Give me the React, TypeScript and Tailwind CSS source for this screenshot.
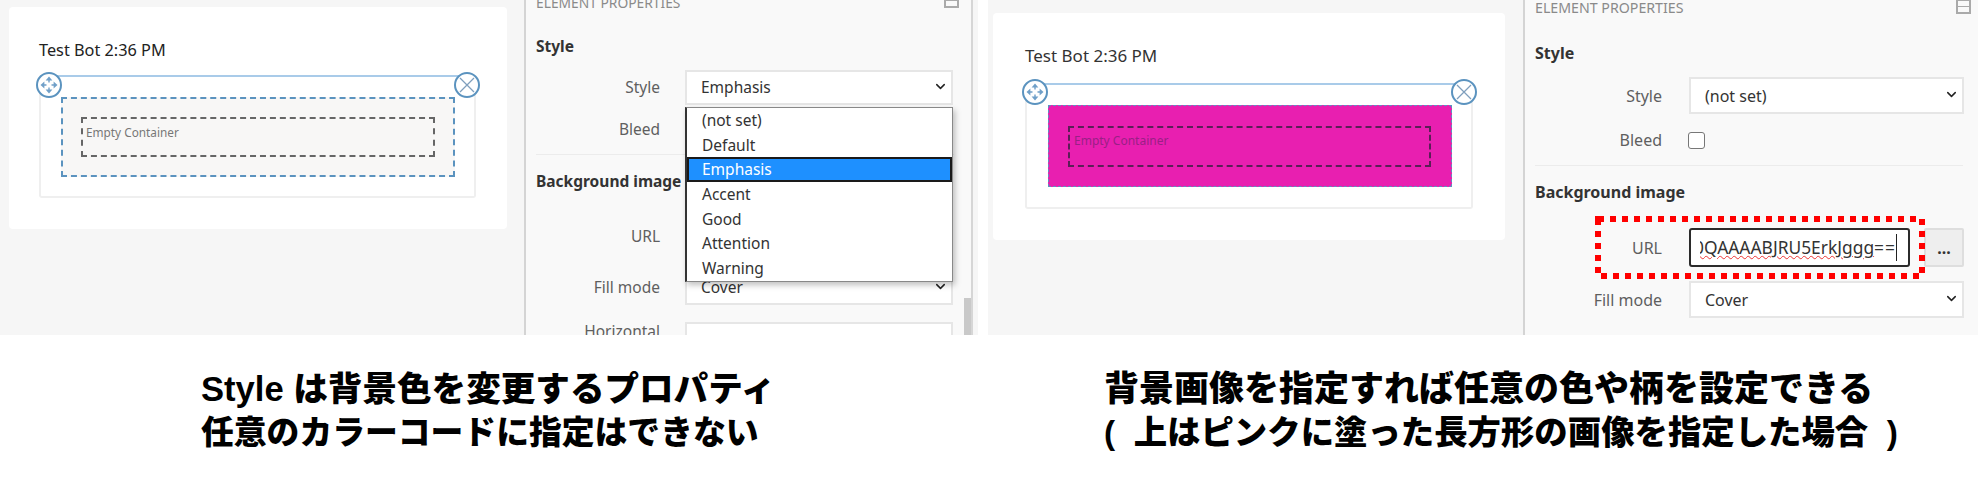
import type { ReactNode } from "react";
import { ChevronDown } from "lucide-react";

function MoveHandle({ className }: { className: string }) {
  return (
    <div className={`absolute w-[26px] h-[26px] rounded-full border-2 border-[#5b93bf] bg-white ${className}`}>
      <svg viewBox="0 0 22 22" className="w-full h-full" fill="#6f9fc8" stroke="none">
        <path d="M11 2.5 L14.4 6.4 H7.6 Z" />
        <path d="M11 19.5 L14.4 15.6 H7.6 Z" />
        <path d="M2.5 11 L6.4 7.6 V14.4 Z" />
        <path d="M19.5 11 L15.6 7.6 V14.4 Z" />
        <path d="M10.3 6 H11.7 V8.5 H10.3 Z M10.3 13.5 H11.7 V16 H10.3 Z M6 10.3 H8.5 V11.7 H6 Z M13.5 10.3 H16 V11.7 H13.5 Z" />
      </svg>
    </div>
  );
}

function CloseHandle({ className }: { className: string }) {
  return (
    <div className={`absolute w-[26px] h-[26px] rounded-full border-2 border-[#5b93bf] bg-white ${className}`}>
      <svg viewBox="0 0 22 22" className="w-full h-full" fill="none" stroke="#7f9fbd" strokeWidth="1.3">
        <path d="M4 4 L18 18 M18 4 L4 18" />
      </svg>
    </div>
  );
}

function Select({ value, className }: { value: string; className: string }) {
  return (
    <div className={`flex items-center justify-between bg-white border-2 border-[#e6e6e6] pl-[14px] pr-[3px] text-[#333] ${className}`}>
      <span>{value}</span>
      <ChevronDown size={15} strokeWidth={2.4} className="text-[#222] mb-[2px]" />
    </div>
  );
}

function Row({ label, labelWidth, gap, className, children }: { label: string; labelWidth: string; gap: string; className: string; children?: ReactNode }) {
  return (
    <div className={`flex items-center ${gap} ${className}`}>
      <div className={`text-right text-[#5f5f5f] shrink-0 ${labelWidth}`}>{label}</div>
      {children}
    </div>
  );
}

const options = ["(not set)", "Default", "Emphasis", "Accent", "Good", "Attention", "Warning"];

function LeftShot() {
  return (
    <div className="flex w-[978px] h-[335px] bg-[#f6f6f6] overflow-hidden shrink-0">
      <div className="w-[524px] shrink-0 pl-[9px] pt-[7px]">
        <div className="w-[498px] h-[222px] bg-white rounded-[4px] pl-[30px] pt-[33px]">
          <div className="text-[16.3px] leading-[20px] text-[#222]">Test Bot 2:36 PM</div>
          <div className="relative w-[437px] h-[123px] mt-[15px] border-2 border-[#efefef] border-t-[#a9cbe9] rounded-[3px] pl-[20px] pt-[20px]">
            <MoveHandle className="-left-[5px] -top-[5px]" />
            <CloseHandle className="-right-[6px] -top-[5px]" />
            <div className="w-[394px] h-[80px] border-2 border-dashed border-[#5b93bf] bg-[#f8f7f6] pl-[18px] pt-[18px]">
              <div className="w-[354px] h-[40px] border-2 border-dashed border-[#666] pl-[3px] text-[11.8px] leading-[26px] text-[#777]">Empty Container</div>
            </div>
          </div>
        </div>
      </div>
      <div className="relative w-[449px] h-full shrink-0 border-l-2 border-r-2 border-l-[#d4d4d4] border-r-[#d6d6d6] bg-[#f9f9f9] pl-[10px] text-[15.5px]">
        <div className="flex justify-between items-center h-[20px] -mt-[7px] pr-[12px] text-[13.8px] text-[#8a8a8a]">
          <span>ELEMENT PROPERTIES</span>
          <span className="w-[15px] h-[15px] mb-[5px] border-2 border-[#aaa] flex items-center"><span className="w-full h-[1px] bg-[#aaa]" /></span>
        </div>
        <div className="mt-[23px] h-[20px] leading-[20px] font-bold text-[#333]">Style</div>
        <Row label="Style" labelWidth="w-[124px]" gap="gap-[25px]" className="mt-[14px]">
          <Select value="Emphasis" className="w-[268px] h-[35px]" />
        </Row>
        <Row label="Bleed" labelWidth="w-[124px]" gap="gap-[25px]" className="mt-[13px] h-[24px]" />
        <div className="mt-[12px] mr-[17px] h-[1px] bg-[#ececec]" />
        <div className="mt-[16px] h-[20px] leading-[20px] font-bold text-[#333]">Background image</div>
        <Row label="URL" labelWidth="w-[124px]" gap="gap-[25px]" className="mt-[28px] h-[35px]" />
        <Row label="Fill mode" labelWidth="w-[124px]" gap="gap-[25px]" className="mt-[16px]">
          <Select value="Cover" className="w-[268px] h-[35px]" />
        </Row>
        <div className="flex items-start gap-[25px] mt-[17px]">
          <div className="w-[124px] shrink-0 text-right text-[#5f5f5f] -mt-[2px]">Horizontal</div>
          <div className="w-[268px] h-[35px] bg-white border-2 border-[#e6e6e6]" />
        </div>
        <div className="absolute right-0 top-[298px] w-[7px] h-[37px] bg-[#c9c9c9]" />
        <div className="absolute left-[159px] top-[107px] w-[268px] h-[175px] bg-white border border-[#888] border-l-2 border-l-[#333] shadow-[2px_3px_6px_rgba(0,0,0,0.25)] text-[#333]">
          {options.map((o) =>
            o === "Emphasis" ? (
              <div key={o} className="h-[25px] leading-[21px] pl-[13px] bg-[#1e90ff] text-white border-2 border-[#1a1a1a]">{o}</div>
            ) : (
              <div key={o} className="h-[24.6px] leading-[24.6px] pl-[15px]">{o}</div>
            )
          )}
        </div>
      </div>
    </div>
  );
}

function RightShot() {
  return (
    <div className="flex w-[990px] h-[335px] bg-[#f6f6f6] overflow-hidden shrink-0">
      <div className="w-[535px] shrink-0 pl-[5px] pt-[13px]">
        <div className="w-[512px] h-[227px] bg-white rounded-[4px] pl-[32px] pt-[33px]">
          <div className="text-[17px] leading-[20px] text-[#333]">Test Bot 2:36 PM</div>
          <div className="relative w-[448px] h-[126px] mt-[17px] border-2 border-[#efefef] border-t-[#a9cbe9] rounded-[3px] pl-[21px] pt-[20px]">
            <MoveHandle className="-left-[5px] -top-[6px]" />
            <CloseHandle className="-right-[6px] -top-[6px]" />
            <div className="w-[404px] h-[82px] border border-dashed border-[#5b93bf] bg-[#e81fb0] pl-[19px] pt-[20px]">
              <div className="w-[363px] h-[41px] border-2 border-dashed border-[#5a1f56] pl-[4px] text-[12px] leading-[26px] text-[#9a1f86]">Empty Container</div>
            </div>
          </div>
        </div>
      </div>
      <div className="relative flex-1 h-full border-l-2 border-[#d4d4d4] bg-[#f9f9f9] pl-[10px] text-[16px]">
        <div className="flex justify-between items-center h-[20px] -mt-[2px] pr-[7px] text-[14.2px] text-[#8a8a8a]">
          <span>ELEMENT PROPERTIES</span>
          <span className="w-[15px] h-[15px] mb-[3px] border-2 border-[#aaa] flex items-center"><span className="w-full h-[1px] bg-[#aaa]" /></span>
        </div>
        <div className="mt-[25px] h-[20px] leading-[20px] font-bold text-[#333]">Style</div>
        <Row label="Style" labelWidth="w-[127px]" gap="gap-[27px]" className="mt-[14px]">
          <Select value="(not set)" className="w-[275px] h-[37px]" />
        </Row>
        <Row label="Bleed" labelWidth="w-[127px]" gap="gap-[26px]" className="mt-[14px] h-[24px]">
          <div className="w-[17px] h-[17px] bg-white border border-[#777] rounded-[3px]" />
        </Row>
        <div className="mt-[13px] mr-[15px] h-[1px] bg-[#ececec]" />
        <div className="mt-[16px] h-[20px] leading-[20px] font-bold text-[#333]">Background image</div>
        <Row label="URL" labelWidth="w-[127px]" gap="gap-[27px]" className="mt-[26px]">
          <div className="flex items-center w-[221px] h-[39px] bg-white border-2 border-[#2b2b2b] rounded-[3px] pl-[9px] pr-[11px] whitespace-nowrap text-[#333] text-[17.4px] shrink-0">
            <div className="flex-1 flex justify-end overflow-hidden">
              <span className="underline decoration-wavy decoration-[#e33] decoration-1">0QAAAABJRU5ErkJggg</span>
              <span className="border-r border-[#222] tracking-[1px]">==</span>
            </div>
          </div>
          <div className="-ml-[13px] w-[40px] h-[39px] bg-[#eeeeee] border-2 border-[#dedede] rounded-[2px] flex items-center justify-center text-[#333] font-bold shrink-0">...</div>
        </Row>
        <Row label="Fill mode" labelWidth="w-[127px]" gap="gap-[27px]" className="mt-[14px]">
          <Select value="Cover" className="w-[275px] h-[37px]" />
        </Row>
        <svg className="absolute left-[70px] top-[216px] w-[330px] h-[63px]" viewBox="0 0 330 63" fill="none" stroke="#f00" strokeWidth="6" strokeDasharray="6 6">
          <rect x="3" y="3" width="324" height="57" />
        </svg>
      </div>
    </div>
  );
}

export default function App() {
  return (
    <div className="w-[1978px] h-[477px] bg-white overflow-hidden font-['Noto_Sans','Noto_Sans_CJK_JP',sans-serif]">
      <div className="flex justify-between">
        <LeftShot />
        <RightShot />
      </div>
      <div className="flex">
        <div className="w-[978px] pl-[201px] pt-[32px] leading-[44px] font-black text-black whitespace-pre font-['Liberation_Sans','Noto_Sans_CJK_JP',sans-serif]">
          <div className="text-[34.6px]">Style は背景色を変更するプロパティ</div>
          <div className="text-[32.8px]">任意のカラーコードに指定はできない</div>
        </div>
        <div className="flex-1 pl-[126px] pt-[32px] leading-[44px] font-black text-black whitespace-pre font-['Liberation_Sans','Noto_Sans_CJK_JP',sans-serif]">
          <div className="text-[35px]">背景画像を指定すれば任意の色や柄を設定できる</div>
          <div className="text-[33.4px]">(  上はピンクに塗った長方形の画像を指定した場合  )</div>
        </div>
      </div>
    </div>
  );
}
